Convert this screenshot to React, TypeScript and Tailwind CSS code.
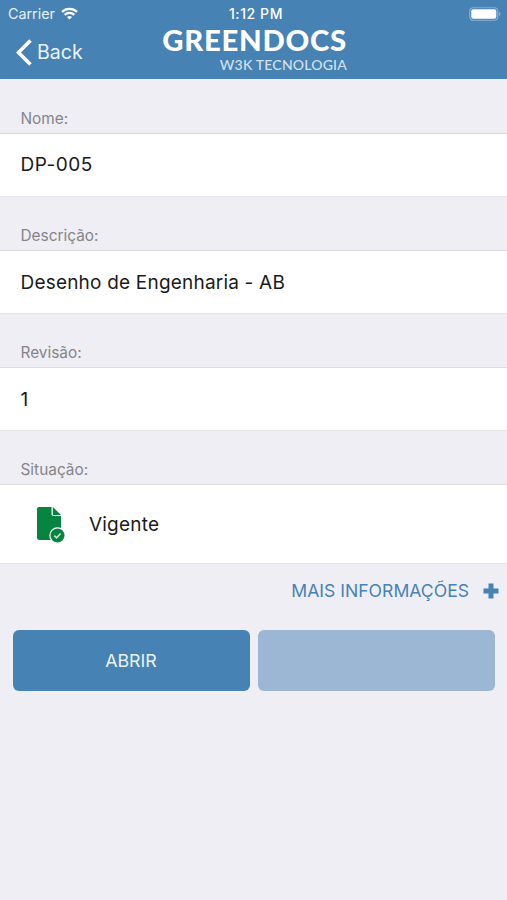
import React from 'react';

interface FieldProps {
  label: string;
  className?: string;
  children: React.ReactNode;
}

const Field: React.FC<FieldProps> = ({ label, className = 'h-[63px]', children }) => (
  <section>
    <div className="flex h-[54.3px] items-end border-b border-[#dcdbe0] px-[20.5px] pb-[5px]">
      <h2 className="whitespace-nowrap text-[15.4px] leading-[19px] text-[#85858a]">{label}</h2>
    </div>
    <div className={`flex items-center border-b border-[#e6e5ea] bg-white px-[20.5px] pt-[2px] text-[19px] tracking-[0.2px] text-[#1a1a1a] ${className}`}>
      {children}
    </div>
  </section>
);

const WifiIcon = () => (
  <svg className="h-[13px] w-[17px]" viewBox="0 0 17 13" fill="none" stroke="white" strokeWidth="2.3">
    <path d="M1 4.9a10.6 10.6 0 0 1 15 0" />
    <path d="M3.7 7.9a6.8 6.8 0 0 1 9.6 0" />
    <path d="M8.5 12.6 6 10.1a3.6 3.6 0 0 1 5 0Z" fill="white" stroke="none" />
  </svg>
);

const BatteryIcon = () => (
  <svg className="h-[14px] w-[32px]" viewBox="0 0 32 14" fill="none">
    <rect x="0.75" y="0.75" width="28" height="12.5" rx="3.5" stroke="#86aed0" strokeWidth="1.2" />
    <rect x="2.3" y="2.3" width="25" height="9.4" rx="2" fill="white" />
    <path d="M30 5v4c1-.4 1.500-1.100 1.500-2S31 5.400 30 5Z" fill="#86aed0" />
  </svg>
);

const DocumentIcon = () => (
  <svg className="h-[38px] w-[30px]" viewBox="0 0 30 38" fill="none">
    <path d="M3 1H15.5V8q0 2 2 2H25V34H3Q1 34 1 32V3Q1 1 3 1Z" fill="#07843f" />
    <path d="M16.8 1 25 9H16.8Z" fill="#07843f" />
    <circle cx="21.5" cy="29.5" r="8.2" fill="white" />
    <circle cx="21.5" cy="29.5" r="7" fill="#07843f" />
    <path d="m18.3 29.7 2.3 2.2 4-4.4" stroke="#c8e5d4" strokeWidth="1.6" />
  </svg>
);

export default function App() {
  return (
    <div className="min-h-screen w-full overflow-hidden bg-[#efeef4] font-['Inter','Liberation_Sans',sans-serif]">
      <header className="h-[79.3px] bg-[#4682b4] text-white">
        <div className="grid h-[27px] grid-cols-3 items-center pl-[8px] pr-[6px]">
          <div className="flex items-center gap-[6px]">
            <span className="text-[14.3px] text-[#e7eff6]">Carrier</span>
            <WifiIcon />
          </div>
          <span className="pl-[3px] text-center text-[14px] font-medium tracking-[0.6px]">1:12 PM</span>
          <div className="flex justify-end">
            <BatteryIcon />
          </div>
        </div>
        <div className="grid h-[52px] grid-cols-[160px_187px_1fr]">
          <button className="flex h-[51px] items-center pl-[16px] text-[19.6px]">
            <svg className="mr-[5px] h-[27px] w-[16px]" viewBox="0 0 16 27" fill="none" stroke="white" strokeWidth="3.6">
              <path d="M14.5 1.5 2.5 13.5l12 12" />
            </svg>
            <span className="pt-px text-[#edf3f8]">Back</span>
          </button>
          <div className="flex flex-col items-end whitespace-nowrap font-['Lato',sans-serif]">
            <span className="text-[29.3px] leading-[26px] font-black tracking-[0.75px]">GREENDOCS</span>
            <span className="pt-px text-[14px] leading-[22px] font-medium tracking-[0.2px] text-[#d3e1ed]">W3K TECNOLOGIA</span>
          </div>
        </div>
      </header>

      <main>
        <Field label="Nome:">
          <span className="tracking-[0.5px]">DP-005</span>
        </Field>
        <Field label="Descrição:">Desenho de Engenharia - AB</Field>
        <Field label="Revisão:">1</Field>
        <Field label="Situação:" className="h-[79px]">
          <span className="ml-[15.5px] mr-[23px]">
            <DocumentIcon />
          </span>
          Vigente
        </Field>

        <div className="flex h-[54px] items-center justify-end pr-[8px] text-[17.6px] text-[#4682b4]">
          <span>MAIS INFORMAÇÕES</span>
          <svg className="ml-[14px] size-[16px]" viewBox="0 0 16 16" fill="currentColor">
            <path d="M5.5.5h5v5h5v5h-5v5h-5v-5h-5v-5h5Z" />
          </svg>
        </div>

        <div className="grid grid-cols-2 gap-[8px] px-[12.5px] pt-[12px]">
          <button className="h-[61px] rounded-[6px] bg-[#4682b4] text-[17.8px] text-[#eaf2f8]">ABRIR</button>
          <button disabled className="h-[61px] rounded-[6px] bg-[#9bb7d4]" />
        </div>
      </main>
    </div>
  );
}
